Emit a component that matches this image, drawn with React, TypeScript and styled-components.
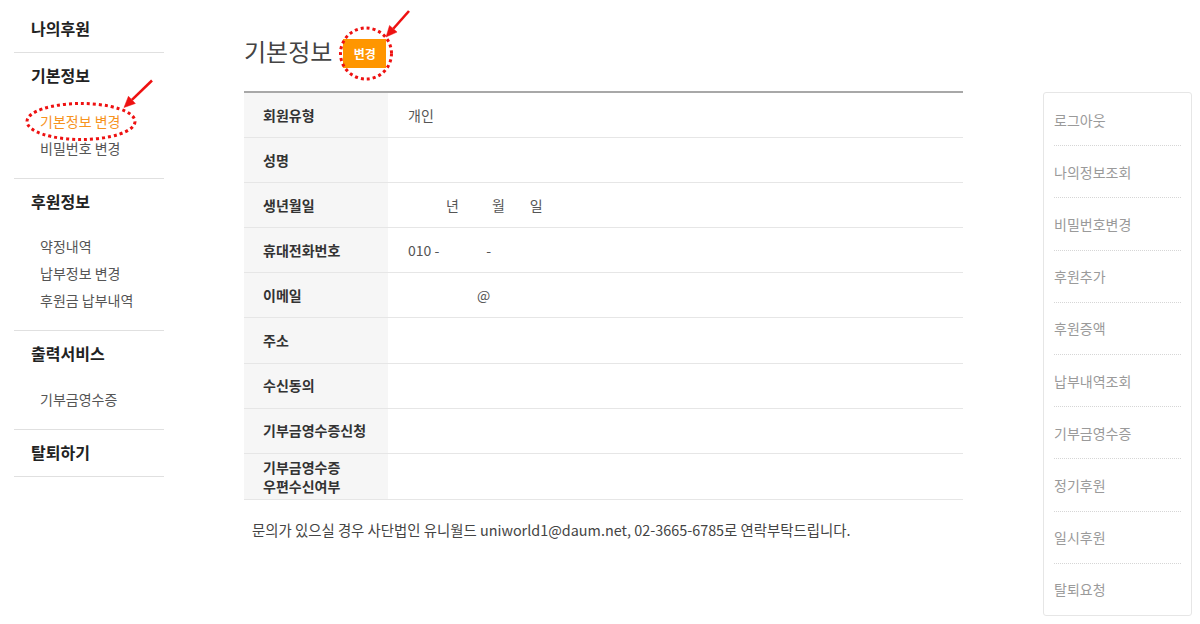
import React from 'react';
import styled, {createGlobalStyle} from 'styled-components';

const GlobalStyle = createGlobalStyle`
  body {
    margin: 0;
    background: #fff;
    font-family: "Noto Sans CJK KR", "Noto Sans", sans-serif;
    color: #333;
  }
`;

const Page = styled.div`
  display: flex;
  align-items: flex-start;
  gap: 80px;
  padding-left: 14px;
`;

/* ---------- left menu ---------- */

const Sidebar = styled.nav`
  width: 150px;
  flex: none;
`;

const Section = styled.div<{ $first?: boolean; $hasItems?: boolean }>`
  padding: ${p => (p.$first ? '16px' : '10px')} 0 ${p => (p.$hasItems ? '16px' : '12px')} 17px;
  border-bottom: 1px solid #e0e0e0;
`;

const Heading = styled.div`
  font-size: 16px;
  font-weight: bold;
  line-height: 24px;
  color: #222;
`;

const SubList = styled.ul`
  list-style: none;
  margin: 20.5px 0 0;
  padding: 0 0 0 9px;
`;

const SubItem = styled.li<{ $active?: boolean }>`
  position: relative;
  font-size: 14px;
  line-height: 27px;
  color: ${p => (p.$active ? '#f7931e' : '#555')};
`;

/* ---------- red annotations ---------- */

const Note = styled.svg<{ $left: number; $top: number }>`
  position: absolute;
  left: ${p => p.$left}px;
  top: ${p => p.$top}px;
  overflow: visible;
  pointer-events: none;
  z-index: 5;
`;

function Arrow({x1, y1, x2, y2}: { x1: number; y1: number; x2: number; y2: number }) {
    const dx = x2 - x1;
    const dy = y2 - y1;
    const len = Math.hypot(dx, dy);
    const ux = dx / len;
    const uy = dy / len;
    const bx = x2 - ux * 11;
    const by = y2 - uy * 11;
    const nx = -uy * 5;
    const ny = ux * 5;
    return (
        <g fill='#ee1111' stroke='#ee1111'>
            <line x1={x1} y1={y1} x2={bx} y2={by} strokeWidth={2.6}/>
            <polygon points={`${x2},${y2} ${bx + nx},${by + ny} ${bx - nx},${by - ny}`} strokeWidth={0.5}/>
        </g>
    );
}

function Ring({cx, cy, rx, ry}: { cx: number; cy: number; rx: number; ry: number }) {
    return (
        <ellipse cx={cx} cy={cy} rx={rx} ry={ry} fill='none' stroke='#ee1111'
                 strokeWidth={3} strokeDasharray='3 3'/>
    );
}

/* ---------- main ---------- */

const Main = styled.main`
  width: 719px;
  flex: none;
`;

const TitleRow = styled.div`
  display: flex;
  align-items: center;
  padding: 30px 0 19px;
  border-bottom: 2px solid #a8a8a8;
`;

const Title = styled.h2`
  margin: 0;
  font-size: 24px;
  font-weight: normal;
  line-height: 42px;
  color: #444;
`;

const BtnWrap = styled.span`
  position: relative;
  margin: 4px 0 0 11px;
`;

const EditButton = styled.button`
  display: block;
  width: 43px;
  height: 29px;
  padding: 0;
  border: 0;
  background: #ff9600;
  color: #fff;
  font-family: inherit;
  font-size: 12px;
  font-weight: bold;
`;

const Row = styled.div<{ $tall?: boolean }>`
  display: grid;
  grid-template-columns: 144px 1fr;
  min-height: ${p => (p.$tall ? 45.5 : 44.1)}px;
  border-bottom: 1px solid #e6e6e6;
`;

const Label = styled.div`
  display: flex;
  align-items: center;
  padding: 0 19px;
  background: #f6f6f6;
  font-size: 14px;
  font-weight: bold;
  line-height: 19px;
  color: #333;
  white-space: pre-line;
`;

const Value = styled.div`
  display: flex;
  align-items: center;
  padding-left: 20px;
  font-size: 14px;
  color: #555;
`;

const Gap = styled.span<{ $w: number }>`
  display: inline-block;
  width: ${p => p.$w}px;
`;

const Footer = styled.p`
  margin: 20px 0 0 8px;
  font-size: 14.4px;
  line-height: 20px;
  color: #444;
`;

/* ---------- right quick menu ---------- */

const QuickMenu = styled.ul`
  width: 127px;
  flex: none;
  list-style: none;
  margin: 92px 0 0;
  padding: 1px 10px 0;
  border: 1px solid #e6e6e6;
  border-radius: 3px;
`;

const QuickItem = styled.li`
  height: 51.2px;
  display: flex;
  align-items: center;
  font-size: 14px;
  color: #9a9a9a;
  border-bottom: 1px dotted #d6d6d6;

  &:last-child {
    border-bottom: 0;
  }
`;

const menu = [
    {title: '나의후원', items: []},
    {title: '기본정보', items: ['기본정보 변경', '비밀번호 변경']},
    {title: '후원정보', items: ['약정내역', '납부정보 변경', '후원금 납부내역']},
    {title: '출력서비스', items: ['기부금영수증']},
    {title: '탈퇴하기', items: []},
];

const quick = ['로그아웃', '나의정보조회', '비밀번호변경', '후원추가', '후원증액', '납부내역조회', '기부금영수증', '정기후원', '일시후원', '탈퇴요청'];

export default function App() {
    const rows: { label: string; value?: React.ReactNode; tall?: boolean }[] = [
        {label: '회원유형', value: '개인'},
        {label: '성명'},
        {label: '생년월일', value: <><Gap $w={38}/>년<Gap $w={33}/>월<Gap $w={25}/>일</>},
        {label: '휴대전화번호', value: <>010 -<Gap $w={47}/>-</>},
        {label: '이메일', value: <><Gap $w={69}/>@</>},
        {label: '주소'},
        {label: '수신동의'},
        {label: '기부금영수증신청'},
        {label: '기부금영수증\n우편수신여부', tall: true},
    ];

    return (
        <>
            <GlobalStyle/>
            <Page>
                <Sidebar>
                    {menu.map((s, i) => (
                        <Section key={s.title} $first={i === 0} $hasItems={s.items.length > 0}>
                            <Heading>{s.title}</Heading>
                            {s.items.length > 0 && (
                                <SubList>
                                    {s.items.map(it => (
                                        <SubItem key={it} $active={it === '기본정보 변경'}>
                                            {it}
                                            {it === '기본정보 변경' && (
                                                <Note $left={-14} $top={-30} width={130} height={66}>
                                                    <Ring cx={55} cy={43.5} rx={54} ry={18}/>
                                                    <Arrow x1={126} y1={2.5} x2={98} y2={29.5}/>
                                                </Note>
                                            )}
                                        </SubItem>
                                    ))}
                                </SubList>
                            )}
                        </Section>
                    ))}
                </Sidebar>

                <Main>
                    <TitleRow>
                        <Title>기본정보</Title>
                        <BtnWrap>
                            <EditButton>변경</EditButton>
                            <Note $left={-4} $top={-29} width={75} height={72}>
                                <Ring cx={27} cy={43.5} rx={25.5} ry={25.5}/>
                                <Arrow x1={70} y1={1} x2={47} y2={27}/>
                            </Note>
                        </BtnWrap>
                    </TitleRow>
                    {rows.map(r => (
                        <Row key={r.label} $tall={r.tall}>
                            <Label>{r.label}</Label>
                            <Value>{r.value}</Value>
                        </Row>
                    ))}
                    <Footer>
                        문의가 있으실 경우 사단법인 유니월드 uniworld1@daum.net, 02-3665-6785로 연락부탁드립니다.
                    </Footer>
                </Main>

                <QuickMenu>
                    {quick.map(q => <QuickItem key={q}>{q}</QuickItem>)}
                </QuickMenu>
            </Page>
        </>
    );
}
